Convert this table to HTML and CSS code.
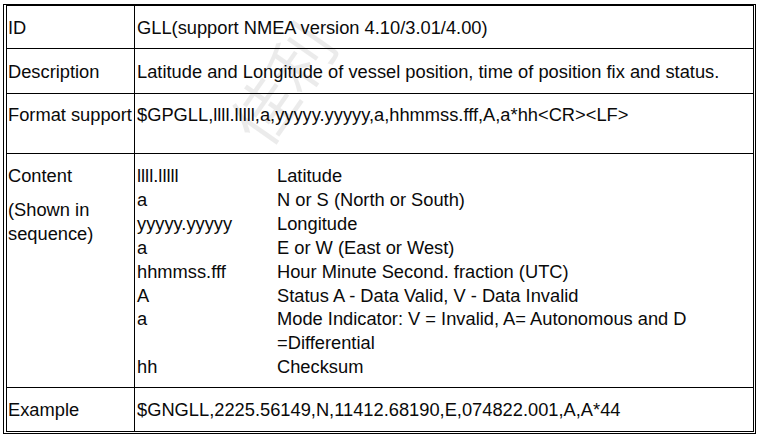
FILE: index.html
```html
<!DOCTYPE html>
<html>
<head>
<meta charset="utf-8">
<link rel="stylesheet" href="styles.css">
</head>
<body>
<div class="frame">
  <div class="grid">
    <div class="cell c1 r1">ID</div>
    <div class="cell c2 r1">GLL(support NMEA version 4.10/3.01/4.00)</div>
    <div class="cell c1 r2">Description</div>
    <div class="cell c2 r2">Latitude and Longitude of vessel position, time of position fix and status.</div>
    <div class="cell c1 r3">Format support</div>
    <div class="cell c2 r3">$GPGLL,llll.lllll,a,yyyyy.yyyyy,a,hhmmss.fff,A,a*hh&lt;CR&gt;&lt;LF&gt;</div>
    <div class="cell c1 r4">
      <div>Content</div>
      <div class="sub">(Shown in<br>sequence)</div>
    </div>
    <div class="cell c2 r4">
      <div class="fields">
        <div>llll.lllll</div><div>Latitude</div>
        <div>a</div><div>N or S (North or South)</div>
        <div>yyyyy.yyyyy</div><div>Longitude</div>
        <div>a</div><div>E or W (East or West)</div>
        <div>hhmmss.fff</div><div>Hour Minute Second. fraction (UTC)</div>
        <div>A</div><div>Status A - Data Valid, V - Data Invalid</div>
        <div>a</div><div>Mode Indicator: V = Invalid, A= Autonomous and D<br>=Differential</div>
        <div>hh</div><div>Checksum</div>
      </div>
    </div>
    <div class="cell c1 r5">Example</div>
    <div class="cell c2 r5">$GNGLL,2225.56149,N,11412.68190,E,074822.001,A,A*44</div>
  </div>
  <div class="watermark">佳利</div>
</div>
</body>
</html>
```
FILE: styles.css
```css
html, body {
  margin: 0;
  padding: 0;
  background: #fff;
}
body {
  font-family: "Liberation Sans", Arial, sans-serif;
  font-size: 18.3px;
  color: #0a0a0a;
}
.frame {
  position: relative;
  margin: 4px 0 0 3px;
  width: 753px;
  height: 430px;
  box-sizing: border-box;
  border: 1px solid #000;
  padding: 0 1px 1px 2px;
}
.grid {
  display: grid;
  grid-template-columns: 127px 618px;
  grid-template-rows: 42px 44px 59px 233px 43px;
  gap: 1px;
  background: #000;
  border: 1px solid #000;
}
.cell {
  background: #fff;
  line-height: 24px;
  white-space: nowrap;
}
.c1 { padding-left: 1px; }
.c2 { padding-left: 2px; }
.r1 { padding-top: 10px; }
.r2 { padding-top: 11px; }
.r3 { padding-top: 9px; }
.r4 { padding-top: 10px; }
.r5 { padding-top: 10px; }
.sub { margin-top: 10px; }
.fields {
  display: grid;
  grid-template-columns: 140px 1fr;
  line-height: 23.9px;
}
.watermark {
  position: absolute;
  left: 212px;
  top: 31px;
  font-family: "Noto Sans CJK SC", sans-serif;
  font-size: 64px;
  line-height: 92px;
  color: rgba(0, 0, 0, 0.08);
  transform: rotate(-55deg);
  pointer-events: none;
  white-space: nowrap;
}
```
